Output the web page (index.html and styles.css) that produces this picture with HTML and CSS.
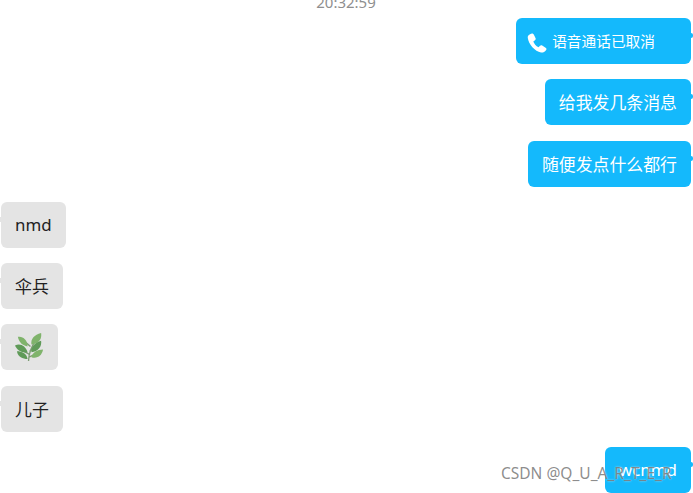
FILE: index.html
```html
<!DOCTYPE html>
<html lang="zh-CN">
<head>
    <meta charset="UTF-8">
    <meta name="viewport" content="width=device-width, initial-scale=1.0">
    <title>聊天记录</title>
    <link rel="stylesheet" href="styles.css">
</head>
<body>
    <div class="chat">
        <div class="time">20:32:59</div>

        <div class="msg me call">
            <svg class="phone" viewBox="0 0 20 20">
                <path d="M1 3 C2 1.5 4 0.5 5 0.5 C6 0.5 6.5 1 7 2 L8.5 5 C9 6 8.7 6.7 8 7.2 L6.3 8.4 C7 10.5 9 13 11.5 14.2 L13 12.8 C13.7 12.2 14.4 12.1 15.2 12.6 L18.6 14.8 C19.6 15.5 19.8 16.3 19 17.2 C17.6 18.9 16 19.8 14 19.5 C8 18.5 1.5 11 0.8 5 C0.7 4.2 0.7 3.6 1 3 Z"/>
            </svg>
            <span>语音通话已取消</span>
        </div>
        <div class="msg me">给我发几条消息</div>
        <div class="msg me">随便发点什么都行</div>

        <div class="msg other">nmd</div>
        <div class="msg other">伞兵</div>
        <div class="msg other emoji">
            <svg class="leaf" viewBox="0 0 30 30">
                <path class="stem" d="M14 29 C14 22 16 15 23 5 M14.5 22 C11 20 8 18 5 17 M15 19 C17 18 20 15 25 13 M16 14 C14 12 12 10 9 9 M14.5 25 C17 24 20 22 24 21"/>
                <path class="light" d="M17 12 C16 6 20 2 27 0 C28 6 25 11 17 12 Z"/>
                <path class="dark" d="M0 13 C5 10 11 13 13 20 C7 21 2 18 0 13 Z"/>
                <path class="light" d="M3 4 C8 3 13 7 13 14 C8 13 4 10 3 4 Z"/>
                <path class="dark" d="M17 20 C16 14 21 10 27 8 C28 14 24 19 17 20 Z"/>
                <path class="dark" d="M2 19 C7 19 12 21 13 27 C8 27 3 25 2 19 Z"/>
                <path class="light" d="M17 25 C18 20 23 17 29 17 C28 23 23 27 17 25 Z"/>
            </svg>
        </div>
        <div class="msg other">儿子</div>

        <div class="msg me">wcnmd</div>
    </div>

    <div class="watermark">CSDN @Q_U_A_R_T_E_R</div>
</body>
</html>
```

FILE: styles.css
```css
html, body {
    margin: 0;
    height: 100%;
    overflow: hidden;
    background-color: white;
}

body {
    font-family: "Noto Sans", "Noto Sans CJK SC", sans-serif;
}

.chat {
    display: flex;
    flex-direction: column;
    gap: 15.25px;
    padding: 0 2px 0 1px;
    margin-top: -7px;
}

.time {
    height: 18px;
    margin-bottom: -8.25px;
    line-height: 18px;
    font-size: 15px;
    text-align: center;
    color: #8f8f8f;
}

.msg {
    position: relative;
    box-sizing: border-box;
    height: 46px;
    padding: 0 14px 1px;
    display: flex;
    align-items: center;
    font-size: 16.9px;
    border-radius: 6px;
}

.me {
    align-self: flex-end;
    color: white;
    background-color: #14b9fc;
}

.me:after {
    content: '';
    position: absolute;
    top: 15px;
    right: -2px;
    width: 2px;
    height: 5px;
    background-color: #14b9fc;
    border-radius: 0 2px 2px 0;
}

.other {
    align-self: flex-start;
    color: #222;
    background-color: #e4e4e4;
}

.other:before {
    content: '';
    position: absolute;
    top: 15px;
    left: -1px;
    width: 1px;
    height: 5px;
    background-color: #e4e4e4;
}

.call {
    padding: 0 36px 2px 11px;
    gap: 5px;
    font-size: 14.7px;
}

.phone {
    width: 20px;
    height: 20px;
    margin-top: 5px;
    fill: white;
}

.emoji {
    padding: 0 14px;
}

.leaf {
    width: 29px;
    height: 29px;
    filter: blur(0.4px);
}

.stem {
    fill: none;
    stroke: #7d9c74;
    stroke-width: 1.4;
}

.light {
    fill: #7fb36b;
}

.dark {
    fill: #5f9a58;
}

.watermark {
    position: absolute;
    top: 463px;
    left: 501px;
    font-size: 15.5px;
    line-height: 20px;
    color: rgba(120, 120, 120, 0.85);
    text-shadow: 0 0 2px rgba(255, 255, 255, 0.7);
    white-space: nowrap;
}
```
